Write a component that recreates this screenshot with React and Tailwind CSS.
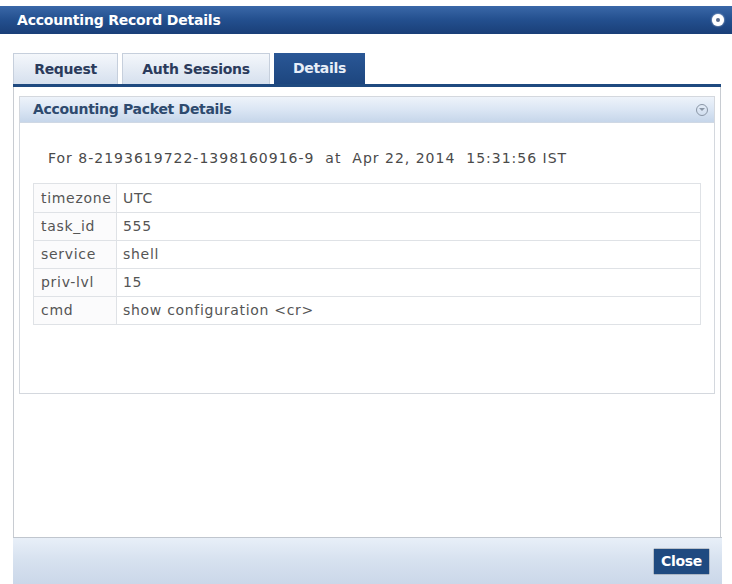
const rows = [
  ['timezone', 'UTC'],
  ['task_id', '555'],
  ['service', 'shell'],
  ['priv-lvl', '15'],
  ['cmd', 'show configuration <cr>'],
]

const tabs = ['Request', 'Auth Sessions', 'Details']

export default function App() {
  return (
    <div className="w-[732px] h-[584px] bg-white flex flex-col overflow-hidden font-['DejaVu_Sans',Verdana,sans-serif]">
      <div className="mt-[6px] h-[28px] flex items-center justify-between pl-[17px] pr-[8px] bg-gradient-to-b from-[#3a68a8] via-[#234f8e] to-[#1a3f78]">
        <span className="text-white text-[14px] font-bold tracking-[-0.2px]">Accounting Record Details</span>
        <span className="w-[12px] h-[12px] rounded-full bg-white flex items-center justify-center shadow-[0_0_2px_#fff]">
          <span className="w-[4px] h-[4px] rounded-full bg-[#56688a]" />
        </span>
      </div>

      <div className="flex-1 flex flex-col pl-[13px] pr-[10px]">
        <div className="flex items-end gap-[4px] h-[50px]">
          <div className="w-[105px] h-[31px] flex items-center justify-center border border-b-0 border-[#c6cfdc] bg-gradient-to-b from-[#f4f7fb] to-[#d6e0ee] text-[#2b3b5c] text-[14px] font-bold tracking-[-0.3px]">{tabs[0]}</div>
          <div className="w-[148px] h-[31px] flex items-center justify-center border border-b-0 border-[#c6cfdc] bg-gradient-to-b from-[#f4f7fb] to-[#d6e0ee] text-[#2b3b5c] text-[14px] font-bold tracking-[-0.3px]">{tabs[1]}</div>
          <div className="w-[91px] h-[31px] flex items-center justify-center bg-gradient-to-b from-[#2a5796] to-[#1d467f] text-[#e8eef8] text-[14px] font-bold tracking-[-0.3px]">{tabs[2]}</div>
        </div>
        <div className="h-[3px] bg-[#1f4a80] mr-[1px]" />

        <div className="flex-1 border-l border-r border-[#c8ccd2] px-[5px] pt-[9px] flex flex-col mr-[1px]">
          <div className="h-[298px] border border-[#d4d8de] flex flex-col">
            <div className="h-[26px] flex items-center justify-between pl-[13px] pr-[6px] bg-gradient-to-b from-[#eef3fa] via-[#dbe6f4] to-[#c6d6ea] border-b border-[#cfd8e4]">
              <span className="text-[14px] font-bold text-[#2e4a6e] tracking-[-0.3px]">Accounting Packet Details</span>
              <span className="w-[12px] h-[12px] rounded-full border border-[#8a96a6] flex items-center justify-center">
                <span className="w-0 h-0 border-l-[3px] border-r-[3px] border-t-[3px] border-l-transparent border-r-transparent border-t-[#8a96a6]" />
              </span>
            </div>
            <div className="pt-[25px] pl-[28px] text-[14px] leading-[20px] text-[#4a4a4a] whitespace-pre tracking-[1px]">
              {'For 8-2193619722-1398160916-9  at  Apr 22, 2014  15:31:56 IST'}
            </div>
            <div className="mt-[15px] mx-[13px] border border-[#dfe2e6]">
              {rows.map(([k, v], i) => (
                <div key={k} className={`h-[28px] flex items-center text-[14px] tracking-[0.7px] text-[#555] ${i > 0 ? 'border-t border-[#dfe2e6]' : ''}`}>
                  <div className="w-[83px] h-full flex items-center pl-[7px] border-r border-[#dfe2e6] bg-[#fbfbfc]">{k}</div>
                  <div className="pl-[6px]">{v}</div>
                </div>
              ))}
            </div>
          </div>
        </div>

        <div className="h-[47px] border-t border-[#c0c6ce] bg-gradient-to-b from-[#e8eff8] via-[#d6e1ef] to-[#cbd7e9] flex items-center justify-end pr-[13px]">
          <button className="h-[25px] px-[7px] bg-[#1f4a80] text-white text-[14px] font-bold tracking-[-0.3px] shadow-[0_0_1px_#000]">Close</button>
        </div>
      </div>
    </div>
  )
}
